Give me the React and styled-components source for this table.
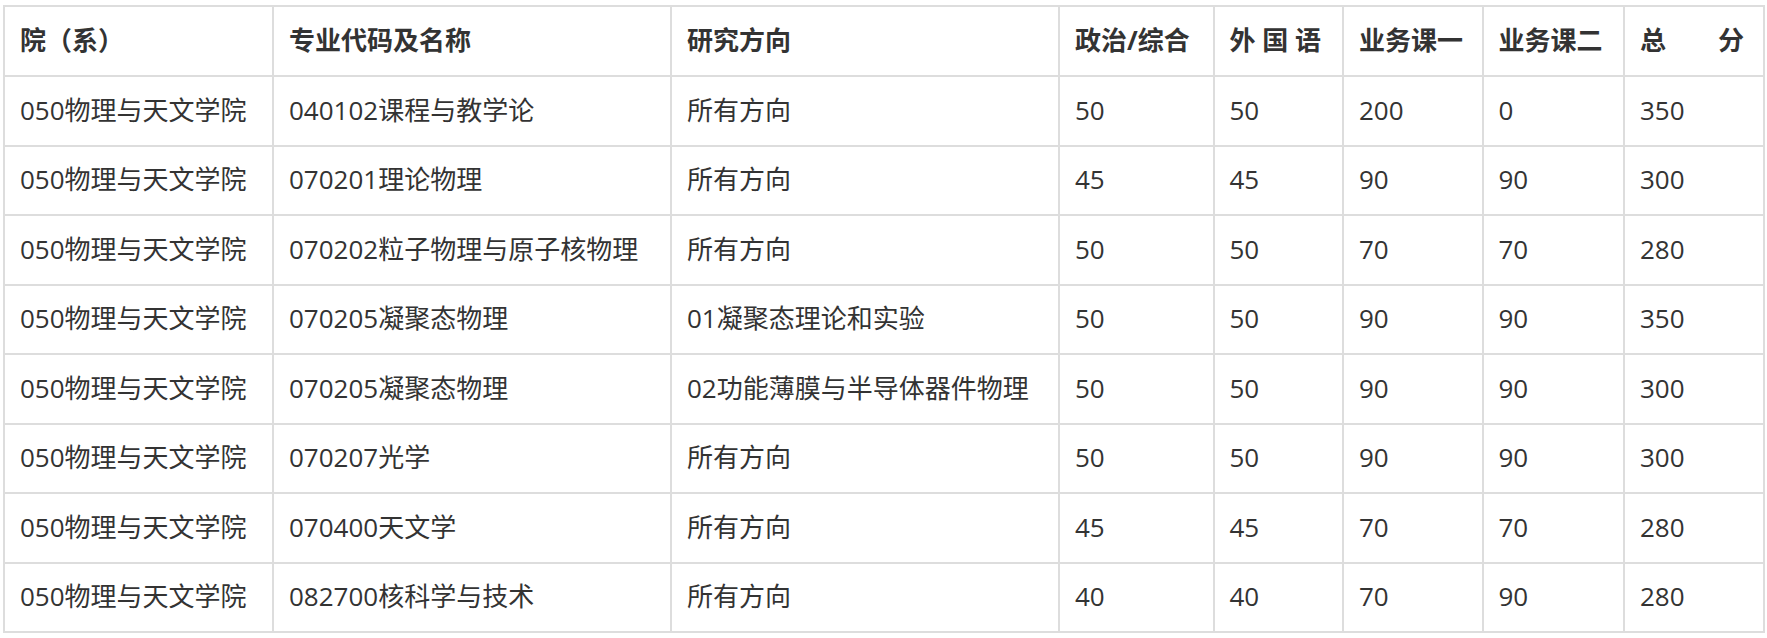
import React from "react";
import styled, { createGlobalStyle } from "styled-components";

const GlobalStyle = createGlobalStyle`
  html, body {
    margin: 0;
    padding: 0;
    background: #ffffff;
  }
  body {
    font-family: "Open Sans", "Noto Sans CJK SC", sans-serif;
    color: #333333;
  }
`;

const Wrapper = styled.div`
  padding: 5px 0 0 3px;
`;

const Table = styled.table`
  border-collapse: collapse;
  table-layout: fixed;
  width: 1762px;
  font-size: 26px;
  color: #333333;
  font-family: "Open Sans", "Noto Sans CJK SC", sans-serif;
`;

const Col = styled.col`
  width: ${(p) => p.$w}px;
`;

const HeadRow = styled.tr`
  height: 70px;
`;

const BodyRow = styled.tr`
  height: 69.5px;
`;

const HeadCell = styled.th`
  border: 2px solid #dddddd;
  padding: 0 15px;
  text-align: left;
  font-weight: 700;
  white-space: nowrap;
  vertical-align: middle;
  line-height: 1.3;
  color: #333333;
`;

const Cell = styled.td`
  border: 2px solid #dddddd;
  padding: 0 15px;
  text-align: left;
  font-weight: 400;
  white-space: nowrap;
  vertical-align: middle;
  line-height: 1.3;
  color: #333333;
`;

const widths = [269, 398, 388, 154.5, 129.5, 139.5, 141.5, 140];

const headers = [
  "院（系）",
  "专业代码及名称",
  "研究方向",
  "政治/综合",
  "外 国 语",
  "业务课一",
  "业务课二",
  "总\u3000\u3000分",
];

const rows = [
  ["050物理与天文学院", "040102课程与教学论", "所有方向", "50", "50", "200", "0", "350"],
  ["050物理与天文学院", "070201理论物理", "所有方向", "45", "45", "90", "90", "300"],
  ["050物理与天文学院", "070202粒子物理与原子核物理", "所有方向", "50", "50", "70", "70", "280"],
  ["050物理与天文学院", "070205凝聚态物理", "01凝聚态理论和实验", "50", "50", "90", "90", "350"],
  ["050物理与天文学院", "070205凝聚态物理", "02功能薄膜与半导体器件物理", "50", "50", "90", "90", "300"],
  ["050物理与天文学院", "070207光学", "所有方向", "50", "50", "90", "90", "300"],
  ["050物理与天文学院", "070400天文学", "所有方向", "45", "45", "70", "70", "280"],
  ["050物理与天文学院", "082700核科学与技术", "所有方向", "40", "40", "70", "90", "280"],
];

export default function App() {
  return (
    <>
      <GlobalStyle />
      <Wrapper>
        <Table>
          <colgroup>
            {widths.map((w, i) => (
              <Col key={i} $w={w} />
            ))}
          </colgroup>
          <thead>
            <HeadRow>
              {headers.map((h, i) => (
                <HeadCell key={i}>{h}</HeadCell>
              ))}
            </HeadRow>
          </thead>
          <tbody>
            {rows.map((r, ri) => (
              <BodyRow key={ri}>
                {r.map((c, ci) => (
                  <Cell key={ci}>{c}</Cell>
                ))}
              </BodyRow>
            ))}
          </tbody>
        </Table>
      </Wrapper>
    </>
  );
}
